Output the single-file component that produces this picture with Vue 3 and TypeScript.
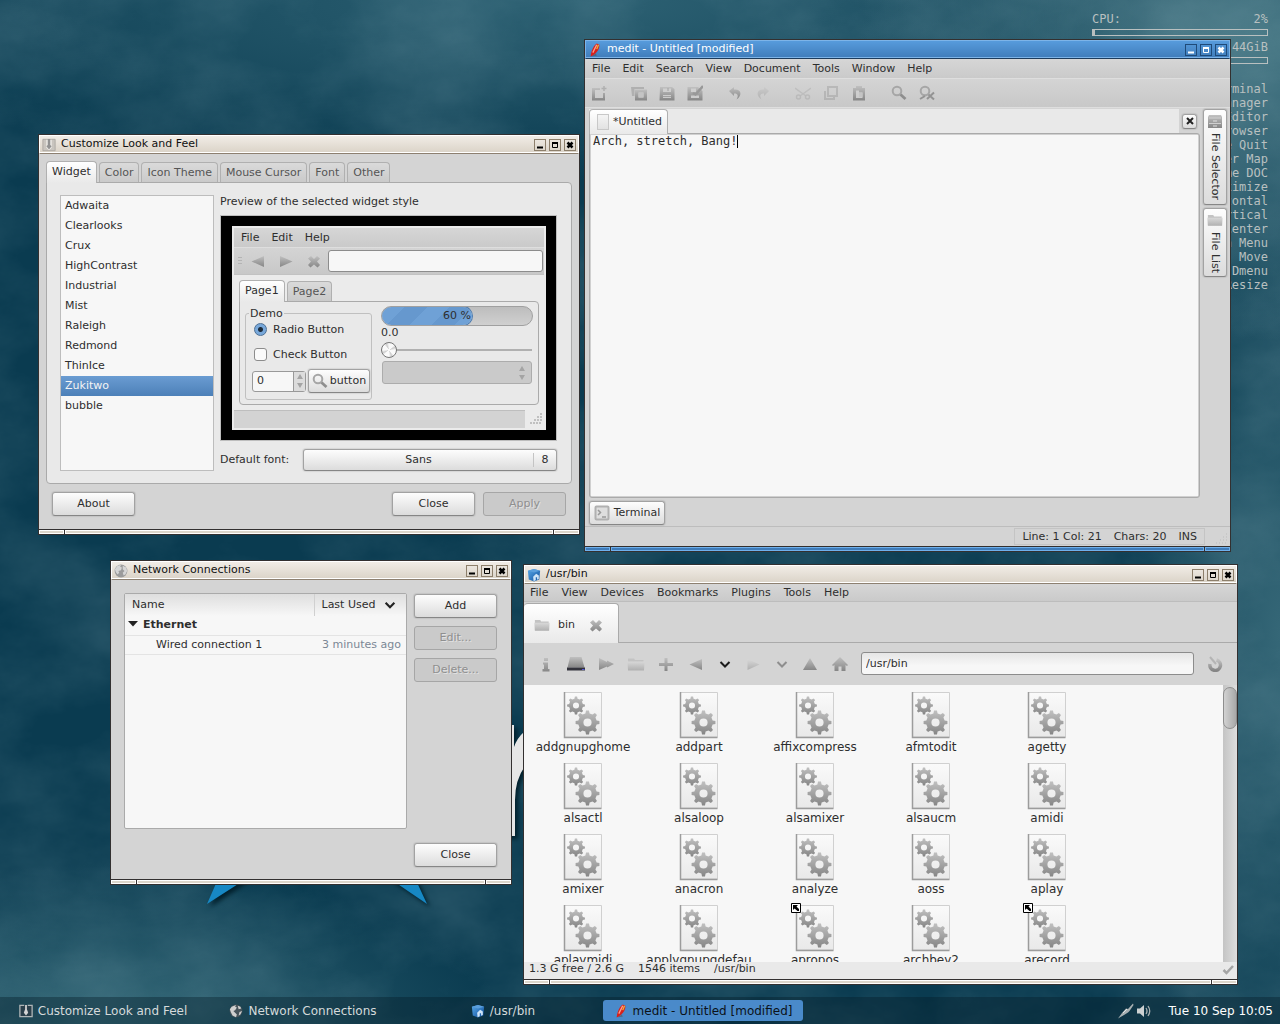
<script setup lang="ts">
import { ref } from 'vue'

interface DesktopWindow {
  id: string
  title: string
  icon: string
  active?: boolean
}

const windows: DesktopWindow[] = [
  { id: 'look', title: 'Customize Look and Feel', icon: 'look' },
  { id: 'network', title: 'Network Connections', icon: 'globe' },
  { id: 'files', title: '/usr/bin', icon: 'cube' },
  { id: 'medit', title: 'medit - Untitled [modified]', icon: 'pen', active: true },
]

const shortcuts: string[] = [
  'Terminal', 'File Manager', 'Editor', 'Browser', 'Close Quit', 'Super Map', 'Home DOC',
  'Maximize', 'Horizontal', 'Vertical', 'Center', 'Main Menu', 'Move', 'Dmenu', 'Resize',
]

const lookTabs = ['Widget', 'Color', 'Icon Theme', 'Mouse Cursor', 'Font', 'Other']
const themes = [
  'Adwaita', 'Clearlooks', 'Crux', 'HighContrast', 'Industrial', 'Mist',
  'Raleigh', 'Redmond', 'ThinIce', 'Zukitwo', 'bubble',
]
const selectedTheme = ref('Zukitwo')
const spin = ref('0')
const scale = ref(0)
const progress = 60

const meditMenu = ['File', 'Edit', 'Search', 'View', 'Document', 'Tools', 'Window', 'Help']
const meditTools: { icon: string; label: string; off?: boolean; gap?: boolean }[] = [
  { icon: 'new', label: 'New' },
  { icon: 'open', label: 'Open', gap: true },
  { icon: 'save', label: 'Save' },
  { icon: 'saveas', label: 'Save as' },
  { icon: 'undo', label: 'Undo', gap: true },
  { icon: 'redo', label: 'Redo', off: true },
  { icon: 'cut', label: 'Cut', off: true, gap: true },
  { icon: 'copy', label: 'Copy', off: true },
  { icon: 'paste', label: 'Paste' },
  { icon: 'find', label: 'Find', gap: true },
  { icon: 'replace', label: 'Replace' },
]
const text = ref('Arch, stretch, Bang!')

const filesMenu = ['File', 'View', 'Devices', 'Bookmarks', 'Plugins', 'Tools', 'Help']
const filesTools: { icon: string; label: string; slim?: boolean }[] = [
  { icon: 'info', label: 'Info' },
  { icon: 'disk', label: 'Devices' },
  { icon: 'jump', label: 'Jump' },
  { icon: 'folder', label: 'New folder' },
  { icon: 'plus', label: 'New tab' },
  { icon: 'back', label: 'Back' },
  { icon: 'chevron', label: 'Back history', slim: true },
  { icon: 'forward', label: 'Forward' },
  { icon: 'chevron-dim', label: 'Forward history', slim: true },
  { icon: 'up', label: 'Up' },
  { icon: 'home', label: 'Home' },
]
const path = ref('/usr/bin')
const files: { name: string; link?: boolean }[] = [
  { name: 'addgnupghome' }, { name: 'addpart' }, { name: 'affixcompress' }, { name: 'afmtodit' }, { name: 'agetty' },
  { name: 'alsactl' }, { name: 'alsaloop' }, { name: 'alsamixer' }, { name: 'alsaucm' }, { name: 'amidi' },
  { name: 'amixer' }, { name: 'anacron' }, { name: 'analyze' }, { name: 'aoss' }, { name: 'aplay' },
  { name: 'aplaymidi' }, { name: 'applygnupgdefau' }, { name: 'apropos', link: true }, { name: 'archbey2' }, { name: 'arecord', link: true },
]

// Outline of an eight-toothed gear with a round hole, centred on (cx, cy).
function gear(cx: number, cy: number, r: number): string {
  const points: string[] = []
  const steps: [number, number][] = [[-13, 0.78], [-7, 1], [7, 1], [13, 0.78]]
  for (let i = 0; i < 8; i++) {
    for (const [offset, k] of steps) {
      const a = ((i * 45 + offset) * Math.PI) / 180
      points.push(`${(cx + Math.cos(a) * r * k).toFixed(2)} ${(cy + Math.sin(a) * r * k).toFixed(2)}`)
    }
  }
  const h = r * 0.34
  return `M${points.join('L')}ZM${cx - h} ${cy}a${h} ${h} 0 1 0 ${2 * h} 0a${h} ${h} 0 1 0 ${-2 * h} 0Z`
}
const smallGear = gear(13, 14.5, 9)
const bigGear = gear(24.5, 31.5, 12)
</script>

<template>
  <div class="desktop">
    <svg class="sprite" width="0" height="0" aria-hidden="true">
      <defs>
        <linearGradient id="g" x1="0" y1="0" x2="0" y2="1">
          <stop offset="0" stop-color="#c0c0c0" /><stop offset="1" stop-color="#868686" />
        </linearGradient>
        <linearGradient id="gl" x1="0" y1="0" x2="0" y2="1">
          <stop offset="0" stop-color="#d8d8d8" /><stop offset="1" stop-color="#b0b0b0" />
        </linearGradient>
        <linearGradient id="paper" x1="0" y1="0" x2="0" y2="1">
          <stop offset="0" stop-color="#fafafa" /><stop offset="1" stop-color="#e9e9e9" />
        </linearGradient>
        <linearGradient id="blue" x1="0" y1="0" x2="1" y2="1">
          <stop offset="0" stop-color="#58a8e8" /><stop offset="1" stop-color="#0f4f9c" />
        </linearGradient>
      </defs>
      <symbol id="i-look" viewBox="0 0 16 16"><path d="M1 1.500H15V14.500H1Z" fill="#c9c5bf" stroke="#aaa6a0" /><path d="M5 2V11L8 14 11 11V2Z" fill="#f4f2ee" /><path d="M6.500 1H9.500V8L11 9.500 8 13 5 9.500 6.500 8Z" fill="#929292" /></symbol>
      <symbol id="i-look-task" viewBox="0 0 16 16"><path d="M6 1.500H1V14.500H15V1.500H10" fill="#2a3f4b" stroke="#aeb4b6" stroke-width="1.500" /><path d="M7 1H9V6L10.500 10 8 13 5.500 10 7 6Z" fill="#d4d4d4" /></symbol>
      <symbol id="i-globe" viewBox="0 0 16 16"><circle cx="8" cy="8" r="7.300" fill="#9b9b9b" /><path d="M1 6 4 2 8 1 7 3 9 4 8 7 5 8 6 10 4 12 2 9ZM10 2 14 4 15 8 13 12 11 13 10 10 12 8 10 6Z" fill="#d6d6d6" /></symbol>
      <symbol id="i-globe-task" viewBox="0 0 16 16"><circle cx="8" cy="8" r="7.300" fill="#46535a" /><path d="M1 6 3 3 8 1 7 3 9 4 7 7 5 8 7 10 9 12 8 15 4 13 2 9ZM10 2 13 3 14 5 11 6ZM12 9 15 8 13 12 11 13Z" fill="#cfcfcf" /></symbol>
      <symbol id="i-cube" viewBox="0 0 16 16"><path d="M1 3 8 1 15 3 14 13 8 15.500 2 13Z" fill="url(#blue)" /><path d="M1 3 8 5 15 3 8 1Z" fill="#5b9fdc" /><path d="M7 10 10.500 6.500 13.500 8.500V12.500L11.500 13.500V10.500H10V14L7.500 15Z" fill="#cfe5f8" /></symbol>
      <symbol id="i-pen" viewBox="0 0 16 16"><path d="M4 15 10 14.500 9 12Z" fill="#555" opacity=".6" /><path d="M3 15.500C3.500 11 5 4 10 0.500L13 2C13.500 8 8.500 13 3 15.500Z" fill="#d8201c" /><path d="M10 2 5.500 11" stroke="#ff9f8c" stroke-width="1.500" /><path d="M12 2 10 7" stroke="#e8b53a" stroke-width="1.500" /></symbol>

      <symbol id="i-new" viewBox="0 0 16 16"><path d="M1 3H9V5H4V13H12V8H14V15.500H1Z" fill="url(#g)" /><path d="M13 1V6M10.500 3.500H15.500" stroke="#b0b0b0" stroke-width="1.500" /></symbol>
      <symbol id="i-open" viewBox="0 0 16 16"><path d="M0 2H13V4H3.500V11H1Z" fill="#b0b0b0" /><path fill-rule="evenodd" d="M4 4.500H16V15.500H4ZM7.500 7.500V12.500H12.500V7.500Z" fill="url(#g)" /><path d="M7.500 7.500H12.500V12.500H7.500Z" fill="#c4c4c4" /></symbol>
      <symbol id="i-save" viewBox="0 0 16 16"><path fill-rule="evenodd" d="M1 2H13L15.500 4V15.500H.5ZM4 3.500V7H12V3.500ZM4 10V13H12V10Z" fill="url(#g)" /><path d="M4 11.500H12M9 3V6" stroke="#a2a2a2" /></symbol>
      <symbol id="i-saveas" viewBox="0 0 16 16"><path fill-rule="evenodd" d="M.5 2H11L15.500 6V15.500H.5ZM4 3.500V7H9V3.500ZM4 10.500V13H12V10.500Z" fill="url(#g)" /><path d="M16 1 8.500 9.500 6 8" fill="none" stroke="#989898" stroke-width="2.500" /></symbol>
      <symbol id="i-undo" viewBox="0 0 16 16"><path d="M2 6 7 2V4.500C14 3.500 16 10 9.500 14.500 12 10.500 10.500 8 7 8.500V11Z" fill="url(#g)" /></symbol>
      <symbol id="i-redo" viewBox="0 0 16 16"><path d="M14 6 9 2V4.500C2 3.500 0 10 6.500 14.500 4 10.500 5.500 8 9 8.500V11Z" fill="url(#g)" /></symbol>
      <symbol id="i-cut" viewBox="0 0 16 16"><path d="M0 3 11 11M16 3 5 11" stroke="#a0a0a0" stroke-width="1.500" /><circle cx="3.500" cy="12" r="2" fill="none" stroke="#999" stroke-width="1.500" /><circle cx="12.500" cy="12" r="2" fill="none" stroke="#999" stroke-width="1.500" /></symbol>
      <symbol id="i-copy" viewBox="0 0 16 16"><path d="M5 2H14V11H5Z M2 6V14H11V12" fill="none" stroke="#8c8c8c" stroke-width="2" /></symbol>
      <symbol id="i-paste" viewBox="0 0 16 16"><path fill-rule="evenodd" d="M2 3H5V1H11V3H14V15.500H2ZM5 5.500V13H11.500V7.500H8V5.500Z" fill="url(#g)" /><path d="M8 7.500H11.500V12H8Z" fill="#c4c4c4" /></symbol>
      <symbol id="i-find" viewBox="0 0 16 16"><circle cx="6" cy="6" r="4.300" fill="none" stroke="#a6a6a6" stroke-width="2" /><path d="M9.500 9.500 14.500 14" stroke="#8e8e8e" stroke-width="2.800" /></symbol>
      <symbol id="i-replace" viewBox="0 0 16 16"><circle cx="6" cy="6" r="4.300" fill="none" stroke="#a6a6a6" stroke-width="2" /><path d="M1 14 6 11M9.500 9.500 15 14.500M15 7.500 8 14" stroke="#939393" stroke-width="2" /></symbol>

      <symbol id="i-info" viewBox="0 0 16 16"><path d="M6 2H10V5H6ZM5 6.500H10V13H11.500V15.500H4.500V13H6V8.500H5Z" fill="url(#g)" /></symbol>
      <symbol id="i-disk" viewBox="0 0 18 16"><path d="M3 1H14.500L17.500 11.500H.5Z" fill="url(#g)" /><path d="M0 11.500H18V14.500H0Z" fill="#33333c" /><path d="M15 13.500H17.500" stroke="#5558d8" /></symbol>
      <symbol id="i-jump" viewBox="0 0 16 16"><path d="M1 2 9 6V4.500L16 8 9 11.500V10.500L1 14Z" fill="url(#g)" /></symbol>
      <symbol id="i-folder" viewBox="0 0 18 16"><path d="M1 2.500H7L8 4H16.500V14H1Z" fill="#c3c3c3" /><path d="M.5 5.500H17.500L17 14.500H1Z" fill="url(#gl)" /></symbol>
      <symbol id="i-plus" viewBox="0 0 16 16"><path d="M6.500 2H9.500V7H15V10H9.500V15H6.500V10H1V7H6.500Z" fill="url(#g)" /></symbol>
      <symbol id="i-back" viewBox="0 0 16 16"><path d="M1.500 8.500 14 3V14Z" fill="url(#g)" /></symbol>
      <symbol id="i-forward" viewBox="0 0 16 16"><path d="M14.500 8.500 2.500 3V14Z" fill="url(#gl)" /></symbol>
      <symbol id="i-play" viewBox="0 0 16 16"><path d="M14.500 8.500 2 3V14Z" fill="url(#g)" /></symbol>
      <symbol id="i-up" viewBox="0 0 16 16"><path d="M8 2 15 14H1Z" fill="url(#g)" /></symbol>
      <symbol id="i-home" viewBox="0 0 16 16"><path d="M8 1 16 9 15 10 13.500 9V15H9.500V10.500H6.500V15H2.500V9L1 10 0 9Z" fill="url(#g)" /></symbol>
      <symbol id="i-chevron" viewBox="0 0 16 16"><path d="M3.500 6 8 10.500 12.500 6" fill="none" stroke="#1c1c1c" stroke-width="2" /></symbol>
      <symbol id="i-chevron-dim" viewBox="0 0 16 16"><path d="M3.500 6 8 10.500 12.500 6" fill="none" stroke="#8e8e8e" stroke-width="2" /></symbol>
      <symbol id="i-cross" viewBox="0 0 16 16"><path d="M5 3 8 6 11 3 14 5.500 11 8.500 14 12 11.500 14.500 8 11.500 4.500 14.500 2 12 5 8.500 2 5.500Z" fill="url(#g)" /></symbol>
      <symbol id="i-reload" viewBox="0 0 16 16"><path d="M3 8A5.300 5.300 0 1 0 9.500 4" fill="none" stroke="url(#g)" stroke-width="3.500" /><path d="M3 1 9 8" stroke="#b4b4b4" stroke-width="2" /></symbol>
      <symbol id="i-cabinet" viewBox="0 0 16 16"><path d="M2 2H14L15 4V15H1V4Z" fill="url(#g)" /><path d="M2 5H14M2 10.500H14" stroke="#d0d0d0" /><path d="M6 8H10M6 13H10" stroke="#e0e0e0" /></symbol>
      <symbol id="i-term" viewBox="0 0 16 16"><rect x="1.500" y="1.500" width="13" height="13" rx="1" fill="#dedede" stroke="#b0b0b0" stroke-width="2" /><path d="M4 5 6.500 7.500 4 10M8 12H12" fill="none" stroke="#999" stroke-width="1.500" /></symbol>
      <symbol id="i-script" viewBox="0 0 40 48">
        <path d="M1.500 1.500H38.500V46H1.500Z" fill="url(#paper)" stroke="#d0d0d0" /><path d="M1.500 1V46.500H38.500" fill="none" stroke="#9c9c9c" stroke-width="1.500" />
        <path :d="smallGear" fill="url(#g)" fill-rule="evenodd" /><path :d="bigGear" fill="url(#g)" fill-rule="evenodd" />
      </symbol>
    </svg>

    <svg class="clouds" aria-hidden="true">
      <filter id="mist" x="0" y="0" width="100%" height="100%">
        <feTurbulence type="fractalNoise" baseFrequency=".008 .012" numOctaves="6" seed="4" />
        <feColorMatrix values="0 0 0 0 .6  0 0 0 0 .8  0 0 0 0 .85  1 0 0 0 -.3" />
      </filter>
      <rect width="100%" height="100%" filter="url(#mist)" />
    </svg>
    <svg class="logo" viewBox="0 0 330 200" aria-hidden="true">
      <path d="M25 141 7 182 60 148ZM180 150 227 182 208 141Z" fill="#1788c4" />
      <path d="M303 3H314V25Q317 16 325 9V44Q315 58 315 78V114H303Z" fill="#e6e6e6" />
    </svg>

    <aside class="monitor">
      <div class="meter-row"><span>CPU:</span><span>2%</span></div>
      <div class="meter"><i></i></div>
      <div class="meter-row"><span>RAM:</span><span>44GiB</span></div>
      <div class="meter"></div>
      <p v-for="s in shortcuts" :key="s">{{ s }}</p>
    </aside>

    <section v-for="w in windows" :key="w.id" :class="['window', w.id, { active: w.active }]">
      <header class="titlebar">
        <svg class="title-icon"><use :href="`#i-${w.icon}`" /></svg>
        <h2>{{ w.title }}</h2>
        <button class="ctl" aria-label="Minimize"><svg viewBox="0 0 10 10"><path d="M2 7.500H8" stroke="currentColor" stroke-width="2" /></svg></button>
        <button class="ctl" aria-label="Maximize"><svg viewBox="0 0 10 10"><path d="M2.500 3V7.500H7.500V3" fill="none" stroke="currentColor" /><path d="M2 3H8" stroke="currentColor" stroke-width="2" /></svg></button>
        <button class="ctl" aria-label="Close"><svg viewBox="0 0 10 10"><path d="M2.500 2.500 7.500 7.500M7.500 2.500 2.500 7.500" stroke="currentColor" stroke-width="2.500" /></svg></button>
      </header>

      <div v-if="w.id === 'look'" class="look-body">
        <div class="tabs" role="tablist">
          <button v-for="(t, i) in lookTabs" :key="t" role="tab" :class="['tab', { on: i === 0 }]">{{ t }}</button>
        </div>
        <div class="panel look-panel">
          <ul class="themes" role="listbox" aria-label="Widget style">
            <li v-for="t in themes" :key="t" role="option" :aria-selected="t === selectedTheme" :class="{ sel: t === selectedTheme }" @click="selectedTheme = t">{{ t }}</li>
          </ul>
          <div class="look-main">
            <p class="caption">Preview of the selected widget style</p>
            <div class="frame">
              <div class="preview">
                <nav class="menubar"><button>File</button><button>Edit</button><button>Help</button></nav>
                <div class="pv-tools">
                  <svg class="grip" viewBox="0 0 4 10"><path d="M0 1.500H4M0 4.500H4M0 7.500H4" stroke="#b4b4b4" /></svg>
                  <button class="tool" aria-label="Previous"><svg><use href="#i-back" /></svg></button>
                  <button class="tool" aria-label="Next"><svg><use href="#i-play" /></svg></button>
                  <button class="tool" aria-label="Stop"><svg><use href="#i-cross" /></svg></button>
                  <input class="entry" aria-label="Address" />
                </div>
                <div class="tabs pv-tabs"><button class="tab on">Page1</button><button class="tab">Page2</button></div>
                <div class="panel pv-panel">
                  <fieldset class="demo">
                    <legend>Demo</legend>
                    <label class="check"><input type="radio" name="demo" checked />Radio Button</label>
                    <label class="check"><input type="checkbox" />Check Button</label>
                    <div class="demo-row">
                      <span class="spin"><input v-model="spin" aria-label="Value" /><i class="arrows"></i></span>
                      <button class="btn find-btn"><svg><use href="#i-find" /></svg>button</button>
                    </div>
                  </fieldset>
                  <div class="pv-right">
                    <div class="bar" role="progressbar" :aria-valuenow="progress"><i :style="{ width: progress + '%' }"></i><span>60 %</span></div>
                    <output>0.0</output>
                    <input v-model="scale" type="range" min="0" max="100" aria-label="Scale" />
                    <div class="combo"><select disabled aria-label="Choice"></select><i class="arrows"></i></div>
                  </div>
                </div>
                <div class="pv-status"><span></span><svg viewBox="0 0 12 12"><path d="M10 1H12M7 4H12M4 7H12M0 10H12" stroke="#c0c0c0" stroke-width="2" stroke-dasharray="2 1" /></svg></div>
              </div>
            </div>
            <div class="font-row"><span>Default font:</span><button class="btn font-btn"><span>Sans</span><b>8</b></button></div>
          </div>
        </div>
        <footer class="look-actions">
          <button class="btn">About</button><button class="btn push">Close</button><button class="btn" disabled>Apply</button>
        </footer>
      </div>

      <div v-else-if="w.id === 'network'" class="net-body">
        <div class="net-list">
          <table>
            <colgroup><col /><col class="used" /></colgroup>
            <thead><tr><th>Name</th><th><span class="sort">Last Used<svg viewBox="0 0 16 16"><path d="M3 5.500 8 10.500 13 5.500" fill="none" stroke="#222" stroke-width="2.500" /></svg></span></th></tr></thead>
            <tbody>
              <tr class="group"><td colspan="2"><svg viewBox="0 0 10 6"><path d="M0 0H10L5 5.500Z" fill="#222" /></svg>Ethernet</td></tr>
              <tr><td>Wired connection 1</td><td>3 minutes ago</td></tr>
            </tbody>
          </table>
        </div>
        <div class="net-actions">
          <button class="btn">Add</button><button class="btn" disabled>Edit...</button><button class="btn" disabled>Delete...</button>
          <button class="btn net-close">Close</button>
        </div>
      </div>

      <div v-else-if="w.id === 'files'" class="files-body">
        <nav class="menubar"><button v-for="m in filesMenu" :key="m">{{ m }}</button></nav>
        <div class="files-tabs">
          <div class="files-tab"><svg><use href="#i-folder" /></svg><span>bin</span><button aria-label="Close tab"><svg><use href="#i-cross" /></svg></button></div>
        </div>
        <div class="files-tools">
          <button v-for="t in filesTools" :key="t.label" :class="['tool', { slim: t.slim }]" :aria-label="t.label"><svg><use :href="`#i-${t.icon}`" /></svg></button>
          <input v-model="path" class="entry" aria-label="Location" />
          <button class="tool reload" aria-label="Reload"><svg><use href="#i-reload" /></svg></button>
        </div>
        <div class="files-view">
          <div class="grid">
            <figure v-for="f in files" :key="f.name">
              <span class="doc"><svg><use href="#i-script" /></svg><svg v-if="f.link" class="link" viewBox="0 0 10 10"><path d="M.5 .5H9.500V9.500H.5Z" fill="#fff" stroke="#000" /><path d="M2 2H7L5.500 3.500 8 6V8H6.500L3.500 5.500 2 7Z" /></svg></span>
              <figcaption>{{ f.name }}</figcaption>
            </figure>
          </div>
          <div class="scroll"><i></i></div>
        </div>
        <footer class="files-status"><span>1.3 G free / 2.6 G</span><span>1546 items</span><span>/usr/bin</span><svg viewBox="0 0 12 12"><path d="M1.500 6 4.500 9 11 2" fill="none" stroke="#a4a4a4" stroke-width="2.500" /></svg></footer>
      </div>

      <div v-else class="medit-body">
        <nav class="menubar"><button v-for="m in meditMenu" :key="m">{{ m }}</button></nav>
        <div class="medit-tools">
          <button v-for="t in meditTools" :key="t.label" :class="['tool', { off: t.off, gap: t.gap }]" :aria-label="t.label"><svg><use :href="`#i-${t.icon}`" /></svg></button>
        </div>
        <div class="medit-main">
          <div class="medit-left">
            <div class="doc-tabs">
              <div class="strip"><button class="tab on"><i></i>*Untitled</button></div>
              <button class="btn close-doc" aria-label="Close document"><svg viewBox="0 0 10 10"><path d="M2 2 8 8M8 2 2 8" stroke="#222" stroke-width="2" /></svg></button>
            </div>
            <div class="editor"><textarea v-model="text" aria-label="Document text" spellcheck="false"></textarea><i class="caret"></i></div>
            <button class="btn term"><svg><use href="#i-term" /></svg>Terminal</button>
          </div>
          <div class="side">
            <button class="btn"><svg><use href="#i-cabinet" /></svg>File Selector</button>
            <button class="btn"><svg><use href="#i-folder" /></svg>File List</button>
          </div>
        </div>
        <footer class="medit-status"><div><span>Line: 1 Col: 21</span><span>Chars: 20</span><span>INS</span></div><svg viewBox="0 0 12 12"><path d="M10 1H12M7 4H12M4 7H12M0 10H12" stroke="#bcbcbc" stroke-width="1" stroke-dasharray="1 2" /></svg></footer>
      </div>

      <div class="handle"><i></i><i></i><i></i></div>
    </section>

    <footer class="taskbar">
      <button v-for="t in windows" :key="t.id" :class="['task', { on: t.active }]">
        <svg><use :href="`#i-${t.icon}${t.icon === 'look' || t.icon === 'globe' ? '-task' : ''}`" /></svg>{{ t.title }}
      </button>
      <div class="tray">
        <svg viewBox="0 0 16 16"><path d="M0 15.500 4 10 8 5.500 10 6 15 0.500 15.500 2 11.500 8 10 9.500 6 12Z" fill="#a9b0b2" /><path d="M5 10 9 6" stroke="#e4e6e6" /></svg>
        <svg viewBox="0 0 16 16"><path d="M1 5.500H4L8 2V14L4 10.500H1Z" fill="#cdd1d2" /><path d="M10 5Q12 8 10 11M12 3Q15.500 8 12 13" fill="none" stroke="#a9b0b2" stroke-width="1.300" /></svg>
        <time>Tue 10 Sep 10:05</time>
      </div>
    </footer>
  </div>
</template>

<style>
body { margin: 0; }
</style>

<style scoped>
* { box-sizing: border-box; }
.desktop {
  position: relative; display: flex; flex-direction: column; justify-content: flex-end;
  min-height: 100vh; overflow: hidden; color: #2e2e2e;
  font: 11px/14px "DejaVu Sans", Verdana, sans-serif;
  background:
    radial-gradient(ellipse 420px 300px at 100% 4%, #4a7a87, transparent),
    radial-gradient(ellipse 800px 180px at 45% 0, #2d6173, transparent),
    radial-gradient(ellipse 400px 160px at 8% 100%, #356978, transparent),
    radial-gradient(ellipse 160px 520px at 100% 62%, #356777, transparent),
    #0a3b50;
}
button, input, textarea, select { font: inherit; color: inherit; margin: 0; }
button { padding: 0; border: 0; background: none; white-space: nowrap; }
svg { display: block; flex: none; width: 16px; height: 16px; }
p, h2, ul, figure { margin: 0; padding: 0; }
.sprite { position: absolute; width: 0; height: 0; }
.clouds { position: absolute; inset: 0; width: 100%; height: 100%; opacity: .24; }
.logo { position: absolute; left: 200px; top: 722px; width: 330px; height: 200px; filter: drop-shadow(3px 3px 2px #02202c); }

.monitor { position: absolute; top: 12px; right: 12px; width: 176px; color: #b9c0c0; font: 12px/14px "DejaVu Sans Mono", monospace; text-align: right; }
.meter-row { display: flex; justify-content: space-between; }
.meter { height: 7px; margin: 3px 0 4px; border: 1px solid #b9c0c0; }
.meter i { display: block; width: 2px; height: 100%; background: #b9c0c0; }
.meter + p { margin-top: 18px; }

.window { position: absolute; display: flex; flex-direction: column; border: 1px solid #333030; background: #d4d4d4; }
.look { left: 38px; top: 134px; width: 542px; height: 401px; }
.network { left: 110px; top: 560px; width: 402px; height: 325px; }
.files { left: 523px; top: 564px; width: 715px; height: 421px; }
.medit { left: 584px; top: 39px; width: 647px; height: 513px; }
.window > div:not(.handle) { flex: 1; min-height: 0; }

.titlebar {
  display: flex; align-items: center; gap: 3px; height: 19px; padding: 0 2px; flex: none;
  border: 1px solid #fff; border-bottom-color: #8d8070; color: #111;
  background: linear-gradient(#f1ece6, #dad3c7); box-shadow: inset 0 -1px #fff;
}
.title-icon { width: 14px; height: 14px; }
.titlebar h2 { flex: 1; margin-left: 2px; padding-bottom: 2px; font-size: 11px; font-weight: normal; line-height: 14px; }
.ctl { width: 12px; height: 12px; border: 1px solid #8d7f6b; color: #000; }
.ctl svg { width: 10px; height: 10px; }
.active .titlebar { color: #fff; border-color: #7db4e8; border-bottom-color: #1d3c5c; background: linear-gradient(#579bdc, #3f7cba); box-shadow: inset 0 -1px #7db4e8; }
.active .ctl { border-color: #1f4a78; color: #fff; }
.handle { display: flex; flex: none; height: 5px; border-top: 1px solid #333030; background: #333030; gap: 1px; }
.handle i { flex: 1; border: 1px solid #fff; background: #dcd6cb; }
.handle i:first-child, .handle i:last-child { flex: 0 0 25px; }
.active .handle i { border-color: #6fb0ec; background: #3f7cba; }

.menubar { display: flex; gap: 12px; height: 20px; padding: 0 7px; flex: none; background: linear-gradient(#d6d6d6, #cacaca); border-bottom: 1px solid #dedede; }
.tool { display: flex; justify-content: center; align-items: center; width: 28px; height: 28px; flex: none; }
.btn {
  display: flex; align-items: center; justify-content: center; height: 24px;
  border: 1px solid #a2a2a2; border-bottom-color: #868686; border-radius: 3px;
  background: linear-gradient(#fdfdfd, #dcdcdc); box-shadow: 0 0 1px 1px rgb(0 0 0 / 8%);
}
.btn:disabled { color: #8f8f8f; text-shadow: 1px 1px #e2e2e2; background: #cacaca; border-color: #a6a6a6; box-shadow: none; }
.tabs { display: flex; align-items: flex-end; gap: 2px; height: 21px; }
.tab { height: 20px; padding: 0 5px; border: 1px solid #b0b0b0; border-bottom: 0; border-radius: 4px 4px 0 0; color: #555; background: linear-gradient(#dadada, #cacaca); }
.tab.on { position: relative; z-index: 1; height: 22px; margin-bottom: -1px; padding-bottom: 2px; color: #2e2e2e; background: linear-gradient(#fff, #e9e9e9); }
.panel { border: 1px solid #aaa; border-radius: 0 4px 4px 4px; background: #e9e9e9; }
.entry { min-width: 0; flex: 1; border: 1px solid #8c8c8c; border-radius: 3px; background: #f7f7f7; outline: 0; }

.look-body { display: flex; flex-direction: column; padding: 7px 7px 0; }
.look-panel { display: flex; gap: 6px; height: 302px; padding: 12px 14px 12px 13px; flex: none; }
.themes { width: 154px; border: 1px solid #bdbdbd; background: #f7f7f7; list-style: none; }
.themes li { height: 20px; padding: 0 4px; line-height: 19px; }
.themes .sel { color: #f4f4f4; background: linear-gradient(#6a9cd2, #4c80b8); }
.look-main { flex: 1; min-width: 0; }
.caption { height: 20px; line-height: 13px; }
.frame { height: 226px; padding: 10px 10px 10px 11px; border: 1px solid #bdbdbd; background: #000; }
.preview { display: flex; flex-direction: column; height: 204px; padding: 2px; background: #ebebeb; }
.pv-tools { display: flex; align-items: center; height: 27px; padding: 0 1px 0 4px; border-bottom: 1px solid #c2c2c2; background: linear-gradient(#d4d4d4, #c8c8c8); }
.grip { width: 4px; height: 10px; margin-right: 2px; }
.pv-tools .entry { height: 22px; }
.pv-tabs { margin: 5px 5px 0; }
.pv-panel { display: flex; gap: 9px; height: 105px; margin: 0 5px; padding: 0 5px; }
.demo { width: 127px; height: 93px; margin: 5px 0 0; padding: 4px 0 0 8px; border: 1px solid #c0c0c0; border-radius: 3px; min-width: 0; }
.demo legend { margin-left: -5px; padding: 0 1px; line-height: 13px; }
.check { display: flex; align-items: center; gap: 6px; height: 25px; }
.pv-panel .check:first-of-type { margin-top: -7px; }
.check input { appearance: none; width: 13px; height: 13px; border: 1px solid #8c8c8c; border-radius: 3px; background: #fafafa; }
.check input[type="radio"] { border-color: #4c6f94; border-radius: 50%; background: radial-gradient(circle, #1d2b3a 0 2px, #78a8da 3px); }
.demo-row { display: flex; gap: 2px; align-items: center; margin: 2px 0 0 -2px; }
.spin { display: flex; width: 54px; height: 21px; border: 1px solid #999; border-radius: 3px; background: #f7f7f7; }
.spin input { width: 41px; padding: 0 4px; border: 0; border-right: 1px solid #999; background: none; }
.arrows { display: flex; flex-direction: column; justify-content: center; align-items: center; gap: 4px; width: 11px; background: #dcdcdc; }
.arrows::before, .arrows::after { content: ""; border: 3px solid transparent; border-bottom: 5px solid #a4a4a4; border-top: 0; }
.arrows::after { transform: rotate(180deg); }
.find-btn { width: 62px; gap: 2px; }
.pv-right { display: flex; flex-direction: column; flex: 1; padding-top: 4px; }
.bar { position: relative; width: 152px; height: 20px; border: 1px solid #a0a0a0; border-radius: 10px; overflow: hidden; background: linear-gradient(#bdbdbd, #d0d0d0); }
.bar i { display: block; height: 100%; border-radius: 9px; background: repeating-linear-gradient(135deg, #6fa1d6 0 16px, #6698ce 16px 32px); box-shadow: 0 0 0 1px #4c7cb0; }
.bar span { position: absolute; inset: 2px 0 0; text-align: center; }
.pv-right output { height: 15px; line-height: 13px; }
.pv-right input[type="range"] { appearance: none; width: 151px; height: 18px; background: linear-gradient(#b0b0b0, #b0b0b0) center / 100% 2px no-repeat; }
.pv-right input::-webkit-slider-thumb { appearance: none; width: 16px; height: 16px; border: 1px solid #777; border-radius: 50%; background: repeating-conic-gradient(#fafafa 0 45deg, #ccc 65deg, #fafafa 90deg); }
.combo { display: flex; width: 150px; height: 23px; margin: 2px 0 0 1px; border: 1px solid #acacac; border-radius: 3px; background: #cacaca; }
.combo select { appearance: none; flex: 1; border: 0; background: none; }
.combo .arrows { width: 18px; background: none; }
.pv-status { display: flex; gap: 5px; margin-top: 5px; padding-right: 2px; align-items: center; }
.pv-status span { flex: 1; height: 18px; border-top: 1px solid #bebebe; background: #d3d3d3; }
.pv-status svg { width: 12px; height: 12px; }
.font-row { display: flex; justify-content: space-between; align-items: center; margin-top: 8px; }
.font-btn { width: 254px; height: 22px; }
.font-btn span { flex: 1; border-right: 1px solid #c4c4c4; }
.font-btn b { width: 22px; font-weight: normal; }
.look-actions { display: flex; gap: 8px; padding: 8px 6px; }
.look-actions .btn { width: 83px; }
.push { margin-left: auto; }

.net-body { display: flex; gap: 7px; padding: 13px 13px 12px; }
.net-list { width: 283px; height: 236px; border: 1px solid #aaa; border-radius: 2px; background: #f7f7f7; }
table { width: 100%; border-collapse: collapse; table-layout: fixed; }
.used { width: 92px; }
th { height: 22px; padding: 0 7px 1px; font-weight: normal; text-align: left; background: linear-gradient(#dedede, #f7f7f7); }
th + th { border-left: 1px solid #d0d0d0; }
.sort { display: flex; gap: 8px; }
.sort svg { width: 14px; height: 14px; }
td { height: 19px; padding: 0; border-bottom: 1px solid #e4e4e4; }
tr:not(.group) td:first-child { padding-left: 31px; }
td:last-child { color: #7b8795; padding-right: 5px; text-align: right; white-space: nowrap; }
.group td:last-child { color: #2e2e2e; font-weight: bold; text-align: left; padding-left: 3px; }
.group svg { display: inline-block; width: 10px; height: 6px; margin-right: 5px; vertical-align: 1px; }
.net-actions { display: flex; flex-direction: column; gap: 8px; padding-top: 1px; }
.net-actions .btn { width: 83px; }
.net-close { margin-top: auto; }

.files-body { display: flex; flex-direction: column; }
.files .menubar { gap: 13px; height: 18px; padding: 0 6px; border-bottom-color: #bdbdbd; }
.files-tabs { height: 41px; padding-top: 1px; border-bottom: 1px solid #aaa; flex: none; }
.files-tab { display: flex; align-items: center; gap: 8px; width: 95px; height: 40px; padding: 3px 0 0 10px; border: 1px solid #aaa; border-width: 1px 1px 0 0; border-radius: 4px 4px 0 0; background: linear-gradient(#fff, #e9e9e9); }
.files-tab button { margin-left: 5px; }
.files-tools { display: flex; align-items: center; height: 42px; padding: 0 7px; flex: none; }
.files-tools .tool { width: 30px; }
.files-tools .slim { width: 27px; }
.files-tools .tool svg { width: 18px; }
.files-tools .entry { height: 23px; margin: 0 6px 2px; padding: 0 4px; background: linear-gradient(#e6e6e6, #f7f7f7 60%); }
.files-view { display: flex; flex: 1; min-height: 0; overflow: hidden; background: #f7f7f7; }
.grid { display: grid; grid-template-columns: repeat(5, 116px); grid-auto-rows: 71px; flex: 1; padding-left: 1px; align-content: start; }
.grid figure { min-width: 0; padding-top: 6px; text-align: center; }
.doc { position: relative; display: block; width: 40px; margin: 0 auto; }
.doc svg { width: 40px; height: 48px; }
.doc .link { position: absolute; left: -4px; top: -1px; width: 10px; height: 10px; }
figcaption { font-size: 12px; line-height: 16px; }
.scroll { width: 14px; padding: 2px 0; background: linear-gradient(90deg, #c4c4c4, #dedede); }
.scroll i { display: block; height: 42px; border: 1px solid #8e8e8e; border-radius: 7px; background: linear-gradient(90deg, #d2d2d2, #a8a8a8); }
.files-status { display: flex; flex: none; gap: 14px; height: 17px; padding: 0 3px 0 5px; background: #e9e9e9; }
.files-status svg { width: 12px; height: 12px; margin: 2px 0 0 auto; }

.medit-body { display: flex; flex-direction: column; }
.medit-tools { display: flex; height: 29px; flex: none; background: linear-gradient(#d4d4d4, #c8c8c8); border-bottom: 1px solid #dedede; }
.medit-tools .gap { margin-left: 12px; }
.off { opacity: .35; }
.medit-main { display: flex; flex: 1; gap: 3px; padding: 1px 3px 0 4px; min-height: 0; border-bottom: 1px solid #bdbdbd; }
.medit-left { display: flex; flex-direction: column; flex: 1; min-width: 0; }
.doc-tabs { display: flex; align-items: center; gap: 3px; height: 24px; flex: none; padding-right: 3px; }
.strip { display: flex; flex: 1; height: 24px; background: #e9e9e9; }
.strip .tab { display: flex; align-items: center; gap: 4px; height: 25px; padding: 0 5px 0 7px; z-index: 1; }
.strip i { width: 12px; height: 16px; border: 1px solid #c8c8c8; background: linear-gradient(#f4f4f4, #e2e2e2); }
.close-doc { width: 15px; height: 15px; }
.close-doc svg { width: 10px; height: 10px; }
.editor { position: relative; display: flex; flex: 1; padding: 1px; border: 1px solid #aaa; border-radius: 0 3px 3px 3px; background: #d0d0d0; font: 12px/13px "DejaVu Sans Mono", monospace; }
.editor textarea { flex: 1; padding: 0 2px; border: 0; outline: 0; resize: none; background: #f7f7f7; font: inherit; }
.caret { position: absolute; top: 1px; left: calc(3px + 20ch); width: 1px; height: 13px; background: #000; }
.term { align-self: flex-start; width: 76px; height: 24px; margin: 3px 0 1px; gap: 4px; }
.side { display: flex; flex-direction: column; gap: 3px; width: 24px; }
.side .btn { width: 24px; height: 96px; flex-direction: row; justify-content: flex-start; gap: 4px; padding: 3px 0; writing-mode: vertical-rl; line-height: 22px; }
.side .btn:last-child { height: 69px; }
.medit-status { display: flex; justify-content: flex-end; gap: 10px; height: 19px; padding: 1px 1px 1px 0; flex: none; }
.medit-status div { display: flex; gap: 12px; padding: 1px 7px; border: 1px solid #c4c4c4; }
.medit-status svg { width: 14px; height: 12px; align-self: flex-end; }

.taskbar { position: relative; display: flex; align-items: center; height: 27px; padding: 0 7px 0 3px; color: #d5dadb; font-size: 12px; background: rgb(4 24 36 / 36%); }
.task { display: flex; align-items: center; justify-content: center; gap: 5px; flex: 0 1 200px; height: 21px; border-radius: 3px; }
.task svg { width: 14px; height: 14px; }
.task.on { color: #0c1218; background: #4a8aca; }
.tray { display: flex; align-items: center; gap: 2px; margin-left: auto; color: #fff; white-space: nowrap; }
.tray time { margin-left: 15px; }
</style>
